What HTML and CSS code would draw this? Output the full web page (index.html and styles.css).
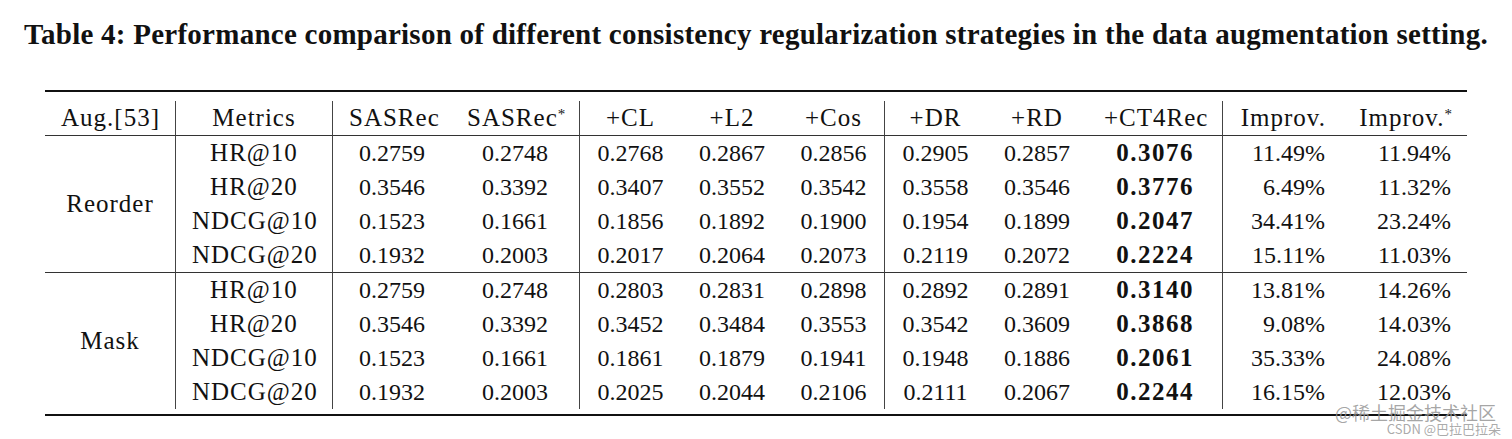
FILE: index.html
```html
<!DOCTYPE html>
<html lang="en">
<head>
<meta charset="utf-8">
<title>Table 4</title>
<link rel="stylesheet" href="styles.css">
</head>
<body>
<div class="page">
  <p class="caption">Table 4: Performance comparison of different consistency regularization strategies in the data augmentation setting.</p>
  <div class="table-wrap">
    <table class="results">
      <colgroup>
        <col class="c1"><col class="c2"><col class="c3"><col class="c4"><col class="c5"><col class="c6">
        <col class="c7"><col class="c8"><col class="c9"><col class="c10"><col class="c11"><col class="c12">
      </colgroup>
      <thead>
        <tr>
          <th class="vr">Aug.[53]</th>
          <th class="vr">Metrics</th>
          <th>SASRec</th>
          <th class="vr">SASRec<sup class="star">*</sup></th>
          <th>+CL</th>
          <th>+L2</th>
          <th class="vr">+Cos</th>
          <th>+DR</th>
          <th>+RD</th>
          <th class="vr">+CT4Rec</th>
          <th class="r">Improv.</th>
          <th class="r">Improv.<sup class="star">*</sup></th>
        </tr>
      </thead>
      <tbody>
        <tr>
          <td class="vr t" rowspan="4">Reorder</td>
          <td class="vr t">HR@10</td><td>0.2759</td><td class="vr">0.2748</td>
          <td>0.2768</td><td>0.2867</td><td class="vr">0.2856</td>
          <td>0.2905</td><td>0.2857</td><td class="vr b">0.3076</td>
          <td class="r">11.49%</td><td class="r">11.94%</td>
        </tr>
        <tr>
          <td class="vr t">HR@20</td><td>0.3546</td><td class="vr">0.3392</td>
          <td>0.3407</td><td>0.3552</td><td class="vr">0.3542</td>
          <td>0.3558</td><td>0.3546</td><td class="vr b">0.3776</td>
          <td class="r">6.49%</td><td class="r">11.32%</td>
        </tr>
        <tr>
          <td class="vr t">NDCG@10</td><td>0.1523</td><td class="vr">0.1661</td>
          <td>0.1856</td><td>0.1892</td><td class="vr">0.1900</td>
          <td>0.1954</td><td>0.1899</td><td class="vr b">0.2047</td>
          <td class="r">34.41%</td><td class="r">23.24%</td>
        </tr>
        <tr>
          <td class="vr t">NDCG@20</td><td>0.1932</td><td class="vr">0.2003</td>
          <td>0.2017</td><td>0.2064</td><td class="vr">0.2073</td>
          <td>0.2119</td><td>0.2072</td><td class="vr b">0.2224</td>
          <td class="r">15.11%</td><td class="r">11.03%</td>
        </tr>
        <tr class="mid">
          <td class="vr t" rowspan="4">Mask</td>
          <td class="vr t">HR@10</td><td>0.2759</td><td class="vr">0.2748</td>
          <td>0.2803</td><td>0.2831</td><td class="vr">0.2898</td>
          <td>0.2892</td><td>0.2891</td><td class="vr b">0.3140</td>
          <td class="r">13.81%</td><td class="r">14.26%</td>
        </tr>
        <tr>
          <td class="vr t">HR@20</td><td>0.3546</td><td class="vr">0.3392</td>
          <td>0.3452</td><td>0.3484</td><td class="vr">0.3553</td>
          <td>0.3542</td><td>0.3609</td><td class="vr b">0.3868</td>
          <td class="r">9.08%</td><td class="r">14.03%</td>
        </tr>
        <tr>
          <td class="vr t">NDCG@10</td><td>0.1523</td><td class="vr">0.1661</td>
          <td>0.1861</td><td>0.1879</td><td class="vr">0.1941</td>
          <td>0.1948</td><td>0.1886</td><td class="vr b">0.2061</td>
          <td class="r">35.33%</td><td class="r">24.08%</td>
        </tr>
        <tr>
          <td class="vr t">NDCG@20</td><td>0.1932</td><td class="vr">0.2003</td>
          <td>0.2025</td><td>0.2044</td><td class="vr">0.2106</td>
          <td>0.2111</td><td>0.2067</td><td class="vr b">0.2244</td>
          <td class="r">16.15%</td><td class="r">12.03%</td>
        </tr>
      </tbody>
    </table>
  </div>
  <div class="watermark">
    <span class="wm-main">@稀土掘金技术社区</span>
    <span class="wm-sub">CSDN @巴拉巴拉朵</span>
  </div>
</div>
</body>
</html>
```

FILE: styles.css
```css
* { box-sizing: border-box; }
html, body { margin: 0; padding: 0; background: #fff; }
.page {
  position: relative;
  width: 1512px;
  height: 439px;
  overflow: hidden;
  font-family: "Liberation Serif", "Times New Roman", serif;
  color: #111;
}
.caption {
  margin: 0;
  padding-top: 17px;
  font-size: 29px;
  letter-spacing: 0.25px;
  line-height: 34px;
  font-weight: bold;
  text-align: center;
  white-space: nowrap;
}
.table-wrap {
  margin: 39px 0 0 45px;
  width: 1422px;
  border-top: 2px solid #111;
  border-bottom: 2px solid #111;
  padding: 9px 0 5px;
}
.results {
  width: 1422px;
  table-layout: fixed;
  border-collapse: separate;
  border-spacing: 0;
  font-size: 24px;
}
.c1 { width: 131px; }
.c2 { width: 157px; }
.c3 { width: 118px; }
.c4 { width: 129px; }
.c5 { width: 101px; }
.c6 { width: 102px; }
.c7 { width: 102px; }
.c8 { width: 101px; }
.c9 { width: 102px; }
.c10 { width: 135px; }
.c11 { width: 118px; }
.c12 { width: 126px; }
.results th,
.results td {
  padding: 0 16px;
  height: 34px;
  line-height: 34px;
  text-align: center;
  font-weight: normal;
  white-space: nowrap;
  vertical-align: middle;
}
.results th {
  border-bottom: 1px solid #333;
  font-size: 25px;
  letter-spacing: 1px;
}
.results .t {
  font-size: 25px;
  letter-spacing: 1px;
}
.results .vr { border-right: 1px solid #444; }
.results .r { text-align: right; }
.results th.r { padding-right: 15px; }
.results .b {
  font-weight: bold;
  font-size: 25px;
  letter-spacing: 1.5px;
}
.results .mid td { border-top: 1px solid #333; }
.star {
  font-size: 15px;
  line-height: 0;
  letter-spacing: 0;
  vertical-align: 0.45em;
}
.watermark {
  position: absolute;
  left: 1335px;
  top: 403px;
  display: flex;
  flex-direction: column;
  align-items: flex-end;
  font-family: "Noto Sans CJK SC", "Noto Sans", sans-serif;
}
.wm-main {
  font-size: 18px;
  line-height: 18px;
  color: rgba(150, 150, 150, 0.85);
}
.wm-sub {
  margin-top: 1px;
  font-size: 13px;
  line-height: 14px;
  margin-right: -5px;
  color: rgba(160, 160, 160, 0.9);
}
```
